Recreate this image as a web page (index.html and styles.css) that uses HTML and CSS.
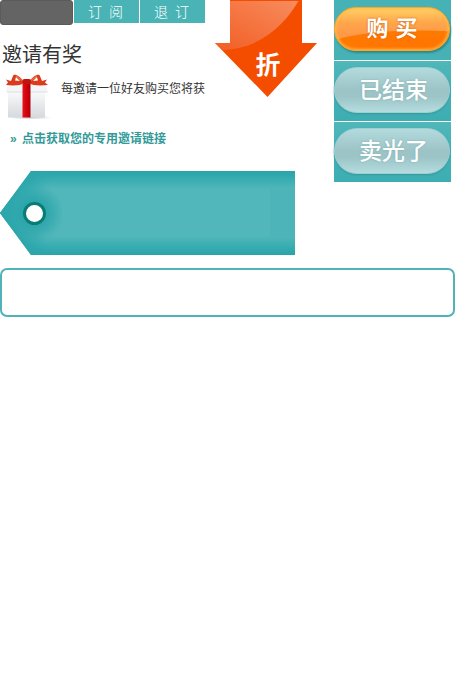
FILE: index.html
```html
<!DOCTYPE html>
<html lang="zh-CN">
<head>
<meta charset="utf-8">
<title>邀请有奖</title>
<link rel="stylesheet" href="styles.css">
</head>
<body>
<div class="top">
  <main class="main">
    <div class="head">
      <section class="invite">
        <nav class="tabs">
          <span class="tab-blank"></span>
          <span class="tab">订 阅</span>
          <span class="tab">退 订</span>
        </nav>
        <h1>邀请有奖</h1>
        <div class="offer">
          <svg class="gift" width="52" height="50" viewBox="0 0 52 50">
            <defs>
              <linearGradient id="box" x1="0" y1="0" x2="0" y2="1"><stop offset="0" stop-color="#fafbfc"/><stop offset="1" stop-color="#d5dade"/></linearGradient>
              <linearGradient id="band" x1="0" y1="0" x2="1" y2="0"><stop offset="0" stop-color="#e5131a"/><stop offset=".6" stop-color="#cf0009"/><stop offset="1" stop-color="#a90008"/></linearGradient>
              <radialGradient id="shade"><stop offset="0" stop-color="#999" stop-opacity=".6"/><stop offset="1" stop-color="#999" stop-opacity="0"/></radialGradient>
            </defs>
            <ellipse cx="30" cy="44.500" rx="22" ry="2" fill="url(#shade)"/>
            <path d="M8 18H45V44.500H8Z" fill="url(#box)"/>
            <path d="M8.500 9H44L47.500 16.500V19H6.500V16.500Z" fill="#f4f5f6"/>
            <path d="M6.500 19H47.500" stroke="#dce1e4"/>
            <path d="M22.500 10H30.500V44.500H22.500Z" fill="url(#band)"/>
            <path d="M24 8.500C19 2 14 0 13 3L11 8L6 6.500L8 9.500L6 12C14 13 20 12.500 25 10Z" fill="#dc3a1d"/>
            <path d="M29 8.500C34 2 39 0 40 3L42 8L47 6.500L45 9.500L48 12C39 13 33 12.500 28 10Z" fill="#dc3a1d"/>
            <path d="M15 7.500L16 4L20 8ZM38 7.500L37 4L33 8Z" fill="#fff"/>
            <path d="M16 3L23 8M37 3L30 8" stroke="#f36b3b" stroke-width="1.500"/>
            <rect x="22.500" y="6" width="8.500" height="5" rx="2" fill="#bf160e"/>
          </svg>
          <p>每邀请一位好友购买您将获</p>
        </div>
        <a class="link"><span class="mark">»</span>点击获取您的专用邀请链接</a>
      </section>
      <svg class="arrow" width="102" height="98" viewBox="0 0 102 98">
        <defs>
          <linearGradient id="gloss" x1="1" y1="0" x2="0.100" y2="1"><stop offset="0" stop-color="#f88c5e"/><stop offset="1" stop-color="#f26027"/></linearGradient>
          <clipPath id="arrowShape"><path d="M15 0H87V43H102L52.500 97L0 43H15Z"/></clipPath>
        </defs>
        <g clip-path="url(#arrowShape)">
          <path d="M0 0H102V98H0Z" fill="#f44d00"/>
          <path d="M0 0H84C73 20 48 49 8 50L0 43Z" fill="url(#gloss)"/>
          <path d="M15 0.500H87" stroke="#f44d00"/>
        </g>
        <text class="discount" x="53" y="74" text-anchor="middle">折</text>
      </svg>
    </div>
    <svg class="tag" width="295" height="84" viewBox="0 0 295 84">
      <defs>
        <linearGradient id="tagFill" x1="0" y1="0" x2="0" y2="1"><stop offset="0" stop-color="#27a4aa"/><stop offset=".1" stop-color="#38adb1"/><stop offset=".22" stop-color="#52b7bb"/><stop offset=".77" stop-color="#52b7bb"/><stop offset=".9" stop-color="#38adb1"/><stop offset="1" stop-color="#27a4aa"/></linearGradient>
        <linearGradient id="tipTop" gradientUnits="userSpaceOnUse" x1="15" y1="21" x2="33" y2="34"><stop offset="0" stop-color="#2ba6ab"/><stop offset="1" stop-color="#2ba6ab" stop-opacity="0"/></linearGradient>
        <linearGradient id="tipBottom" gradientUnits="userSpaceOnUse" x1="15" y1="63" x2="33" y2="50"><stop offset="0" stop-color="#2ba6ab"/><stop offset="1" stop-color="#2ba6ab" stop-opacity="0"/></linearGradient>
        <radialGradient id="holeShade"><stop offset=".35" stop-color="#29a5aa"/><stop offset="1" stop-color="#29a5aa" stop-opacity="0"/></radialGradient>
        <clipPath id="tagShape"><path d="M31 0H295V84H31L0 42Z"/></clipPath>
      </defs>
      <g clip-path="url(#tagShape)">
        <path d="M0 0H295V84H0Z" fill="url(#tagFill)"/>
        <path d="M270 18H295V66H270Z" fill="#4db5ba"/>
        <path d="M0 0H70V84H0Z" fill="url(#tipTop)"/>
        <path d="M0 0H70V84H0Z" fill="url(#tipBottom)"/>
        <circle cx="34" cy="42" r="30" fill="url(#holeShade)"/>
        <circle cx="34.500" cy="42.500" r="10" fill="#fff" stroke="#087d73" stroke-width="3"/>
      </g>
    </svg>
  </main>
  <aside class="buttons">
    <div class="cell"><span class="pill buy"><b>购 买</b></span></div>
    <div class="cell"><span class="pill off"><b>已结束</b></span></div>
    <div class="cell"><span class="pill off"><b>卖光了</b></span></div>
  </aside>
</div>
<div class="panel"></div>
</body>
</html>
```
FILE: styles.css
```css
* { box-sizing: border-box; }
body {
  margin: 0;
  background: #fff;
  color: #333;
  font-family: "Liberation Sans", "Noto Sans CJK SC", sans-serif;
}
svg { display: block; }
.top { display: flex; gap: 17px; height: 255px; }
.main { width: 317px; }
.head { display: flex; gap: 10px; height: 171px; }
.invite { width: 205px; }
.tabs { display: flex; gap: 1px; height: 25px; }
.tab-blank { width: 73px; height: 25px; border-radius: 3px; background: #646464; border: 1px solid #5a5a5a; }
.tab {
  width: 65px;
  height: 23px;
  padding-right: 2px;
  background: #49b3b6;
  color: #fff;
  font-size: 14px;
  font-weight: 300;
  line-height: 24px;
  text-align: center;
  word-spacing: 3px;
}
h1 { margin: 16px 0 0 2px; font-size: 20px; line-height: 28px; font-weight: 400; }
.offer { display: flex; height: 50px; margin-top: 4px; }
.offer p { margin: 7px 0 0 9px; font-size: 12px; line-height: 18px; white-space: nowrap; }
.link { display: flex; margin: 7px 0 0 10px; font-size: 12px; line-height: 19px; font-weight: 700; color: #339a99; white-space: nowrap; }
.mark { width: 12px; }
.discount { font-size: 25px; font-weight: 700; fill: #fff; }
.buttons { display: grid; grid-template-rows: repeat(3, 60px); gap: 1px; width: 117px; height: 182px; }
.cell { padding-top: 6px; background: linear-gradient(#50b7ba, #43b0b4 55%, #3caeb2); }
.cell:first-child { padding-top: 7px; background: #46b2b6; }
.pill { display: flex; justify-content: center; width: 116px; height: 46px; border-radius: 23px; color: #fff; font-size: 23px; line-height: 45px; white-space: nowrap; }
.pill b { padding-left: 3px; font-weight: 500; }
.buy {
  height: 44px;
  border: 1px solid #ffa52e;
  font-size: 22px;
  line-height: 41px;
  background: radial-gradient(ellipse 105px 22px at 85px 44px, #ff7300 0, #ff7900 96%, transparent 100%), linear-gradient(#ffd166, #ffa64b 35%, #ff9848 65%, #ffa32b);
  box-shadow: inset 0 0 3px 1px #ffbd43, 1px 2px 2px #2d898c;
  text-shadow: 0 0 2px #c85400;
}
.buy b { padding-left: 0; font-weight: 700; word-spacing: 1px; }
.off {
  border: 1px solid #9fcfd1;
  background: linear-gradient(#b3dbdd, #9cc3c6 50%, #9cc5c8 65%, #b5dcde);
  box-shadow: 0 1px 2px #36979b;
  text-shadow: 0 0 2px #7faeb1;
}
.panel { height: 49px; margin-top: 13px; border: 2px solid #50b3b7; border-radius: 7px; background: #fff; }
```
